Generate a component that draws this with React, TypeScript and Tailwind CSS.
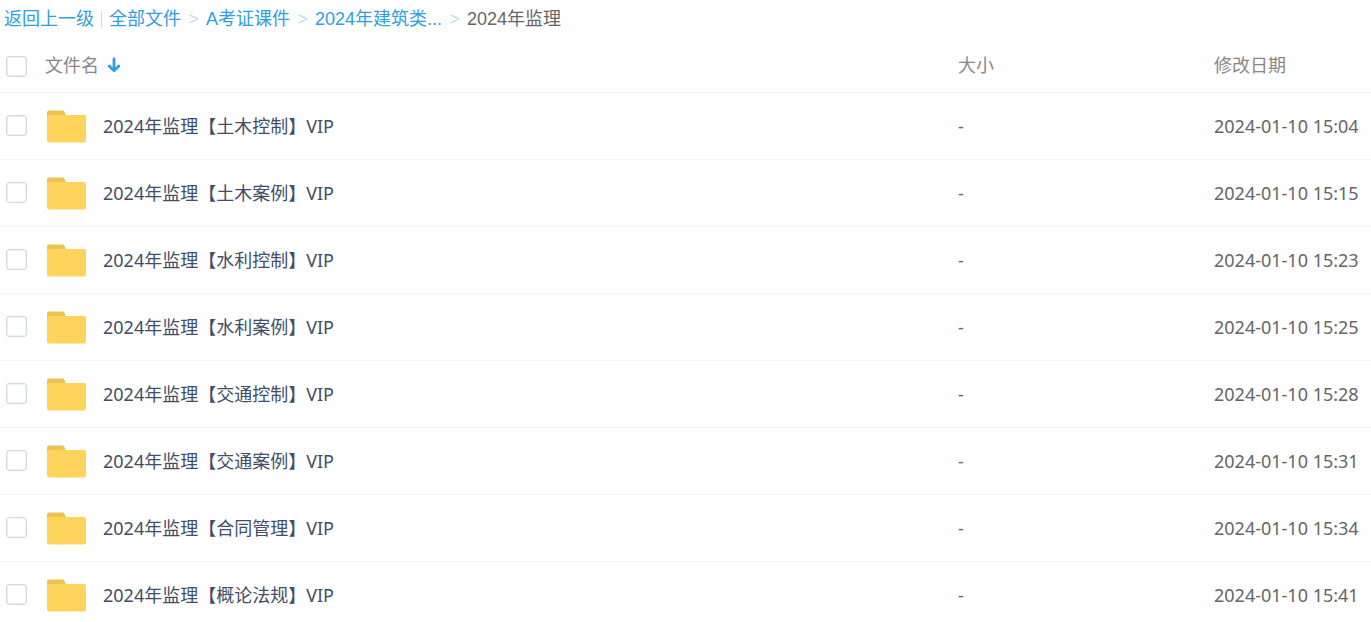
interface FolderItem {
  name: string;
  modified: string;
}

const crumbs = ["全部文件", "A考证课件", "2024年建筑类..."];

const folders: FolderItem[] = [
  { name: "2024年监理【土木控制】VIP", modified: "2024-01-10 15:04" },
  { name: "2024年监理【土木案例】VIP", modified: "2024-01-10 15:15" },
  { name: "2024年监理【水利控制】VIP", modified: "2024-01-10 15:23" },
  { name: "2024年监理【水利案例】VIP", modified: "2024-01-10 15:25" },
  { name: "2024年监理【交通控制】VIP", modified: "2024-01-10 15:28" },
  { name: "2024年监理【交通案例】VIP", modified: "2024-01-10 15:31" },
  { name: "2024年监理【合同管理】VIP", modified: "2024-01-10 15:34" },
  { name: "2024年监理【概论法规】VIP", modified: "2024-01-10 15:41" },
];

function Checkbox({ label }: { label: string }) {
  return (
    <input
      type="checkbox"
      aria-label={label}
      className="block size-[21px] appearance-none rounded-[3px] border border-[#d3d9e3] bg-white inset-ring inset-ring-[#edf0f4] checked:border-[#309fe0] checked:bg-[#309fe0]"
    />
  );
}

function FolderIcon() {
  return (
    <svg width="40" height="34" viewBox="0 0 40 34" className="shrink-0" aria-hidden="true">
      <path d="M1 10V3.5a2 2 0 0 1 2-2h13.5a2 2 0 0 1 1.7.9L19.5 5v5z" fill="#ecc352" />
      <rect x="1" y="6" width="39" height="27.5" rx="2" fill="#ffd45c" />
    </svg>
  );
}

function SortArrow() {
  return (
    <svg width="14" height="16" viewBox="0 0 14 16" aria-hidden="true">
      <path
        d="M7 2v11.5M2.2 9L7 13.8 11.8 9"
        fill="none"
        stroke="#309fe0"
        strokeWidth="2.8"
        strokeLinecap="round"
        strokeLinejoin="round"
      />
    </svg>
  );
}

function Breadcrumb() {
  return (
    <nav className="flex h-[38px] items-center px-1 font-['Liberation_Sans','Noto_Sans_CJK_SC',sans-serif] text-[#309fe0]">
      <a href="#back">返回上一级</a>
      <span className="mx-[7px] h-4 w-px bg-[#c9d9ea]" />
      {crumbs.map((crumb) => (
        <span key={crumb} className="flex">
          <a href="#folder">{crumb}</a>
          <span className="mx-[7px] w-[11px] text-center text-[#c4dbf0]">&gt;</span>
        </span>
      ))}
      <span className="text-[#666666]">2024年监理</span>
    </nav>
  );
}

export default function App() {
  return (
    <main className="min-h-screen bg-[#fefefe] font-['Noto_Sans','Noto_Sans_CJK_SC',sans-serif] text-[18px] leading-6">
      <Breadcrumb />
      <table className="w-full table-fixed text-left">
        <thead>
          <tr className="h-[54px] border-b border-[#f2f4f7] text-[#888888]">
            <th className="w-[45px] pt-1 pl-[6px]">
              <Checkbox label="全选" />
            </th>
            <th className="font-normal">
              <button type="button" className="flex items-center gap-2">
                文件名
                <SortArrow />
              </button>
            </th>
            <th className="w-[256px] font-normal">大小</th>
            <th className="w-[157px] font-normal">修改日期</th>
          </tr>
        </thead>
        <tbody>
          {folders.map((folder) => (
            <tr key={folder.name} className="h-[67px] border-b border-[#f2f4f7] text-[#666666]">
              <td className="pl-[6px]">
                <Checkbox label={folder.name} />
              </td>
              <td>
                <a href="#folder" className="flex items-center gap-[17px] pl-px text-[#424e67]">
                  <FolderIcon />
                  {folder.name}
                </a>
              </td>
              <td>-</td>
              <td className="whitespace-nowrap">{folder.modified}</td>
            </tr>
          ))}
        </tbody>
      </table>
    </main>
  );
}
